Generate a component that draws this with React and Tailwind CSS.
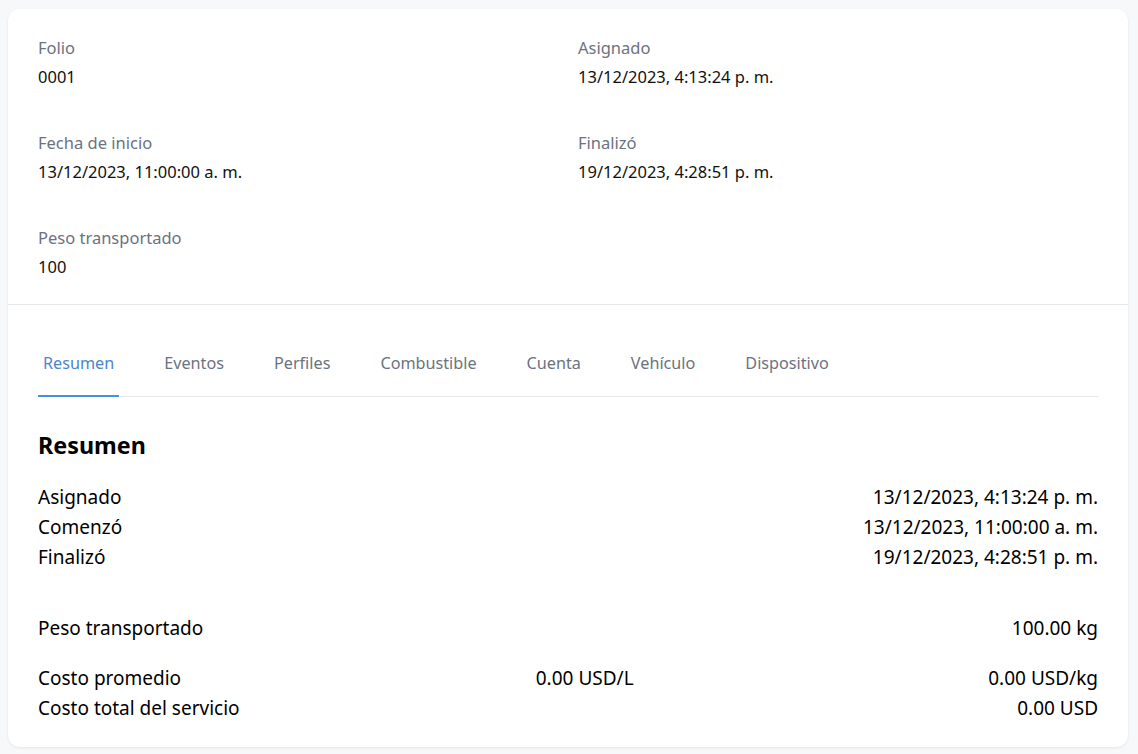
import React, { useState } from 'react';

const info = [
  { label: 'Folio', value: '0001' },
  { label: 'Asignado', value: '13/12/2023, 4:13:24 p. m.' },
  { label: 'Fecha de inicio', value: '13/12/2023, 11:00:00 a. m.' },
  { label: 'Finalizó', value: '19/12/2023, 4:28:51 p. m.' },
  { label: 'Peso transportado', value: '100' },
];

const tabs = ['Resumen', 'Eventos', 'Perfiles', 'Combustible', 'Cuenta', 'Vehículo', 'Dispositivo'];

const App = () => {
  const [active, setActive] = useState('Resumen');

  return (
    <div
      className="min-h-screen bg-[#f7f8fa] pt-[9px] pl-[8px] pr-[10px] pb-[8px]"
      style={{ fontFamily: '"Segoe UI", "Noto Sans", "Open Sans", sans-serif' }}
    >
      <div className="bg-white rounded-xl shadow-[0_1px_3px_rgba(0,0,0,0.08)]">
        <div className="grid grid-cols-2 gap-x-[20px] gap-y-[42px] px-[30px] pt-[27px] pb-[25px] border-b border-[#e5e7eb]">
          {info.map((item) => (
            <div key={item.label}>
              <div className="text-[16.5px] leading-[24px] text-[#6b7280]">{item.label}</div>
              <div className="mt-[5px] text-[16.5px] leading-[24px] text-[#111]">{item.value}</div>
            </div>
          ))}
        </div>

        <div className="px-[30px] pt-[34px] pb-[24px]">
          <div className="flex gap-[40px] border-b border-[#e5e7eb]">
            {tabs.map((t) => (
              <button
                key={t}
                onClick={() => setActive(t)}
                className={
                  'px-[5px] pt-[12px] pb-[20px] -mb-px text-[16.2px] leading-[24px] border-b-2 ' +
                  (active === t
                    ? 'border-[#4a90d9] text-[#4a86c8]'
                    : 'border-transparent text-[#6b7280]')
                }
              >
                {t}
              </button>
            ))}
          </div>

          <h2 className="mt-[32px] text-[23.3px] leading-[32px] font-bold text-black">Resumen</h2>

          <div className="mt-[21px] text-[19px] leading-[30px] text-black">
            <div className="flex justify-between">
              <span>Asignado</span>
              <span>13/12/2023, 4:13:24 p. m.</span>
            </div>
            <div className="flex justify-between">
              <span>Comenzó</span>
              <span>13/12/2023, 11:00:00 a. m.</span>
            </div>
            <div className="flex justify-between">
              <span>Finalizó</span>
              <span>19/12/2023, 4:28:51 p. m.</span>
            </div>

            <div className="flex justify-between mt-[41px]">
              <span>Peso transportado</span>
              <span>100.00 kg</span>
            </div>

            <div className="flex justify-between mt-[20px]">
              <span>Costo promedio</span>
              <span>0.00 USD/L</span>
              <span>0.00 USD/kg</span>
            </div>
            <div className="flex justify-between">
              <span>Costo total del servicio</span>
              <span>0.00 USD</span>
            </div>
          </div>
        </div>
      </div>
    </div>
  );
};

export default App;
